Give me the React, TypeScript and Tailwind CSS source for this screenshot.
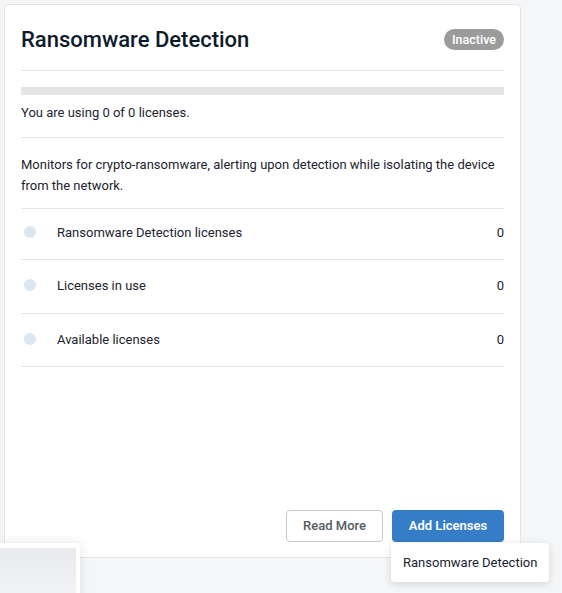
import React from "react";

const rows = [
  { label: "Ransomware Detection licenses", value: 0, pad: "pt-[14px] pb-[16px]" },
  { label: "Licenses in use", value: 0, pad: "pt-[16px] pb-[17px]" },
  { label: "Available licenses", value: 0, pad: "pt-[16px] pb-[16px]" },
];

export default function App() {
  return (
    <div
      className="relative h-[593px] w-[562px] overflow-hidden bg-[#f5f6f8] text-[#1c2430]"
      style={{ fontFamily: "Roboto, 'Liberation Sans', sans-serif" }}
    >
      <div className="pl-[4px] pt-[4px]">
        <div className="flex h-[554px] w-[517px] flex-col rounded-[4px] border border-[#e3e5e8] bg-white px-4">
          {/* Header */}
          <div className="flex items-center justify-between border-b border-[#e5e6e8] pt-[21px] pb-[16px]">
            <h1 className="text-[22px] leading-[28px] font-medium text-[#0d1b2a]">
              Ransomware Detection
            </h1>
            <span className="-mt-[1px] rounded-full bg-[#9b9b9b] px-[8px] text-[12.5px] leading-[21px] font-medium text-white">
              Inactive
            </span>
          </div>

          {/* Usage */}
          <div className="border-b border-[#e5e6e8] pt-[16px] pb-[14px]">
            <div className="h-[8px] w-full bg-[#e5e5e5]" />
            <p className="mt-[8px] text-[13px] leading-[20px]">
              You are using 0 of 0 licenses.
            </p>
          </div>

          {/* Description */}
          <p className="border-b border-[#e5e6e8] pt-[16px] pb-[12px] text-[13px] leading-[21px]">
            Monitors for crypto-ransomware, alerting upon detection while
            isolating the device from the network.
          </p>

          {/* License rows */}
          {rows.map((r) => (
            <div
              key={r.label}
              className={`flex items-start border-b border-[#e5e6e8] text-[13px] leading-[20px] ${r.pad}`}
            >
              <span className="mt-[3px] ml-[3px] h-[12px] w-[12px] rounded-full bg-[#dbe7f3]" />
              <span className="ml-[21px] flex-1">{r.label}</span>
              <span>{r.value}</span>
            </div>
          ))}

          {/* Actions */}
          <div className="mt-auto flex justify-end gap-[9px] pb-[15px]">
            <button className="h-[32px] w-[97px] rounded-[4px] border border-[#c9c9c9] bg-white text-[13px] font-medium text-[#555b63]">
              Read More
            </button>
            <button className="h-[32px] w-[112px] rounded-[4px] bg-[#357dc7] text-[13px] font-semibold text-white">
              Add Licenses
            </button>
          </div>
        </div>
      </div>

      {/* Dropdown under Add Licenses */}
      <div className="absolute top-[543px] left-[391px] flex h-[39px] w-[158px] items-center rounded-[4px] bg-white pl-[12px] text-[13px] text-[#1a2330] shadow-[0_2px_8px_rgba(0,0,0,0.14)]">
        Ransomware Detection
      </div>

      {/* Bottom-left floating panel */}
      <div className="absolute top-[543px] left-0 h-[60px] w-[80px] rounded-tr-[4px] bg-white pt-[5px] pr-[4px] shadow-[0_0_12px_rgba(0,0,0,0.10)]">
        <div className="h-full w-full bg-gradient-to-b from-[#e8eaed] to-[#f3f4f6]" />
      </div>
    </div>
  );
}
